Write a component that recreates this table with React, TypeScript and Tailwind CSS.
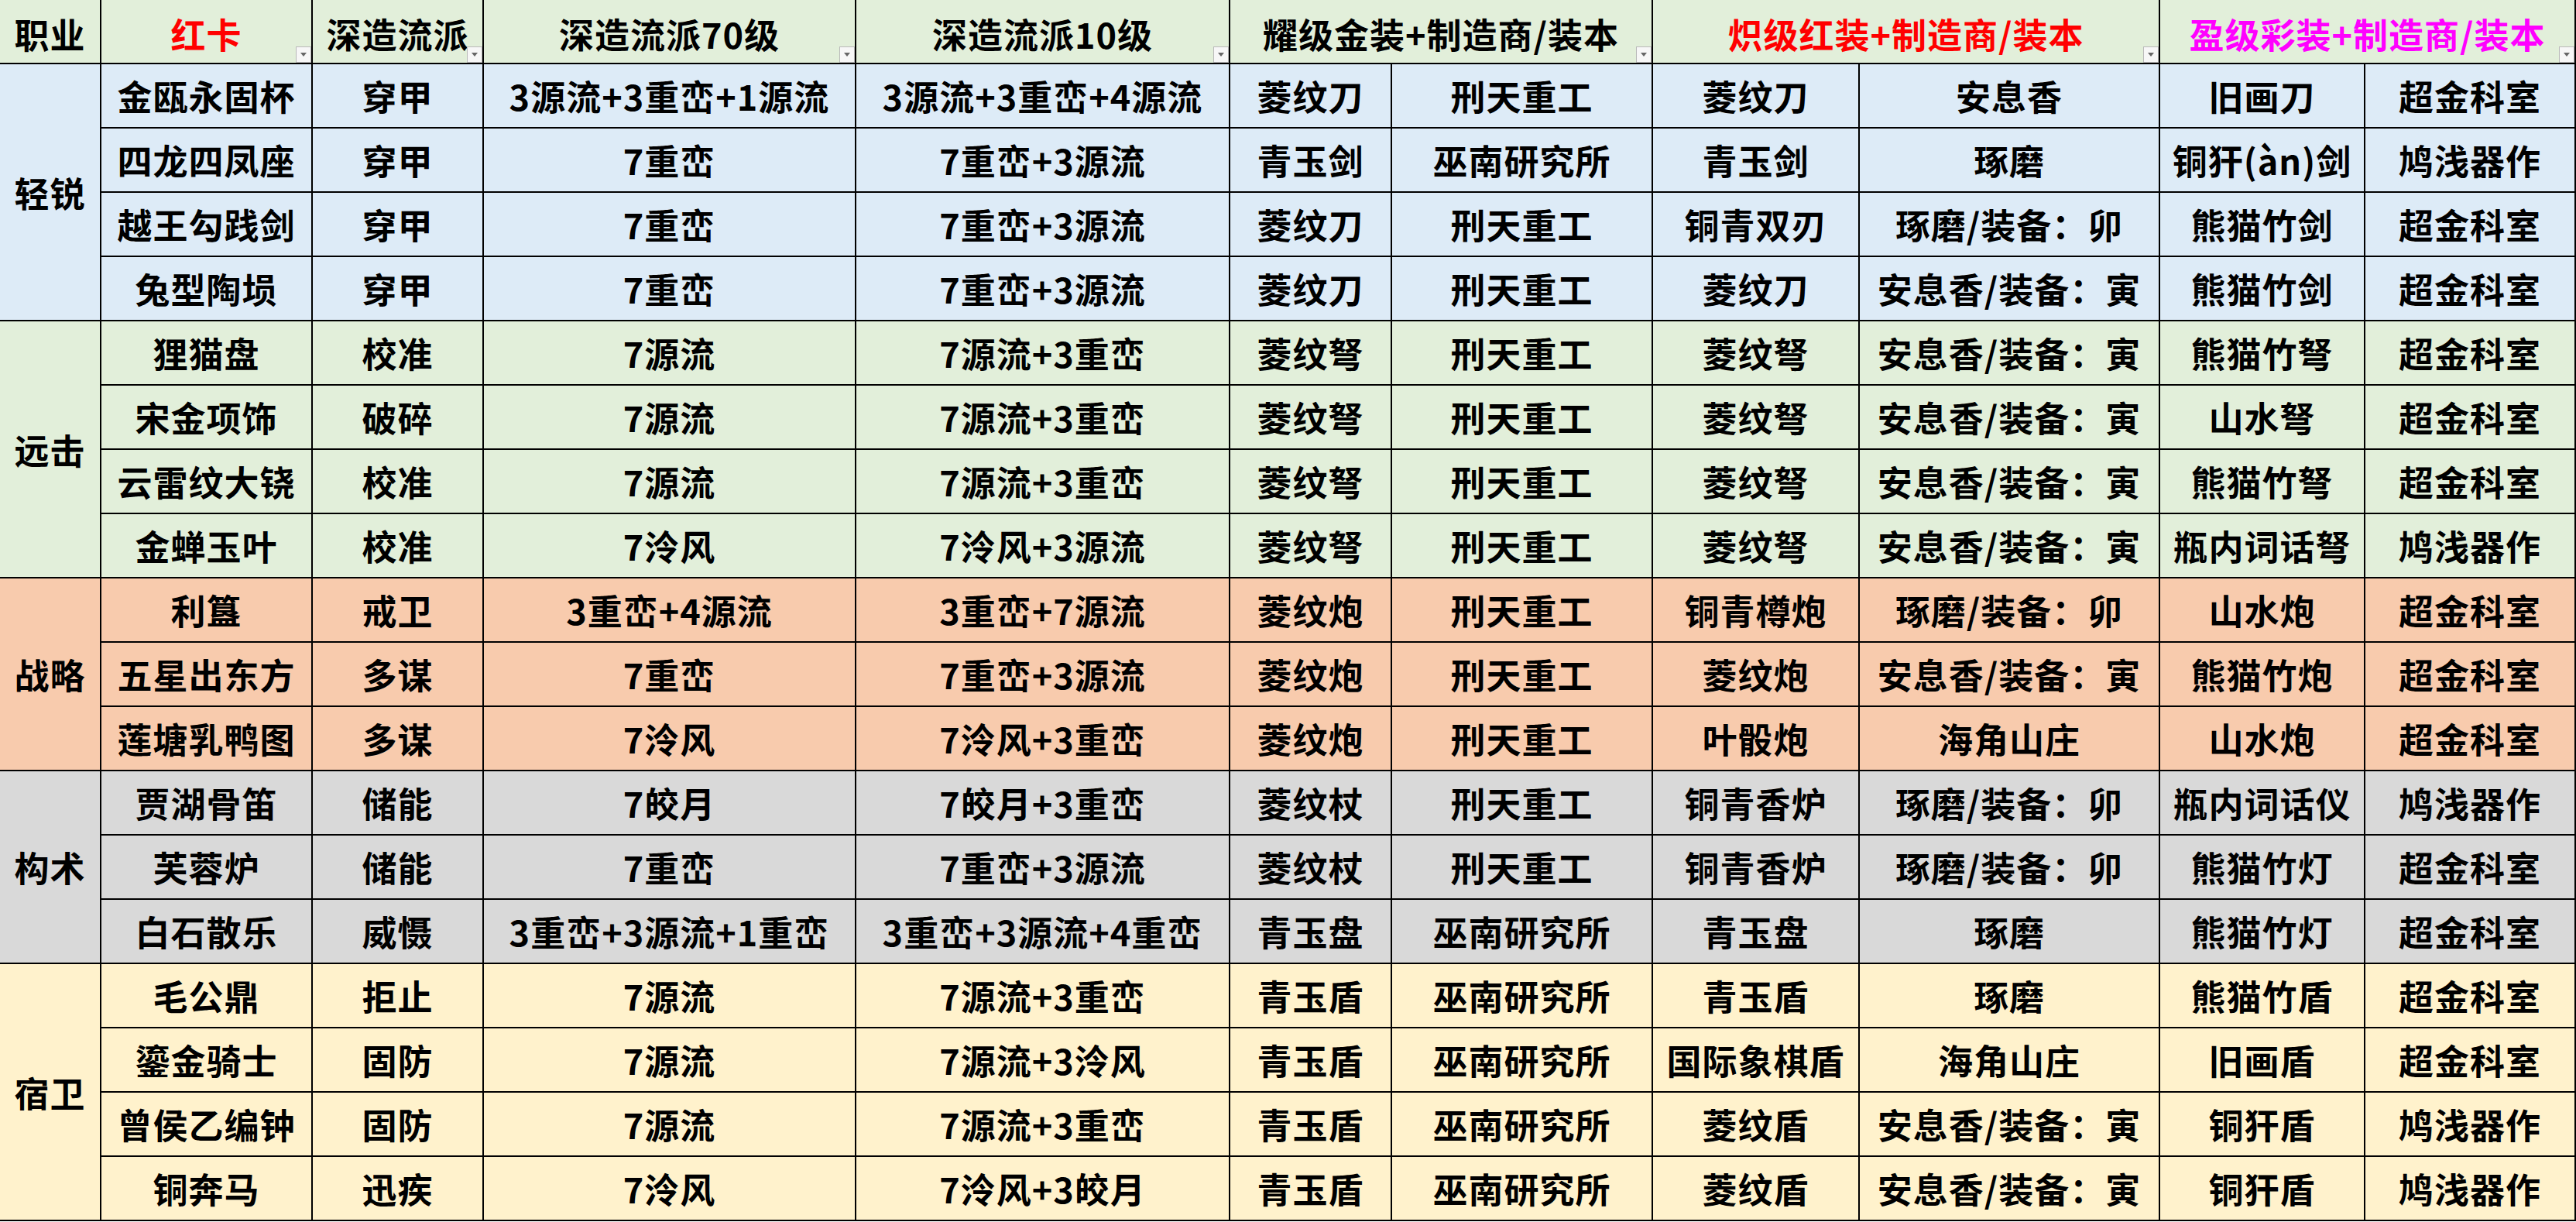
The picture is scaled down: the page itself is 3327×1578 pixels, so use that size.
import React from "react";

type Group = {
  name: string;
  bg: string;
  rows: string[][];
};

const groups: Group[] = [
  {
    name: "轻锐",
    bg: "bg-[#ddebf7]",
    rows: [
      ["金瓯永固杯", "穿甲", "3源流+3重峦+1源流", "3源流+3重峦+4源流", "菱纹刀", "刑天重工", "菱纹刀", "安息香", "旧画刀", "超金科室"],
      ["四龙四凤座", "穿甲", "7重峦", "7重峦+3源流", "青玉剑", "巫南研究所", "青玉剑", "琢磨", "铜犴(àn)剑", "鸠浅器作"],
      ["越王勾践剑", "穿甲", "7重峦", "7重峦+3源流", "菱纹刀", "刑天重工", "铜青双刃", "琢磨/装备：卯", "熊猫竹剑", "超金科室"],
      ["兔型陶埙", "穿甲", "7重峦", "7重峦+3源流", "菱纹刀", "刑天重工", "菱纹刀", "安息香/装备：寅", "熊猫竹剑", "超金科室"],
    ],
  },
  {
    name: "远击",
    bg: "bg-[#e2efda]",
    rows: [
      ["狸猫盘", "校准", "7源流", "7源流+3重峦", "菱纹弩", "刑天重工", "菱纹弩", "安息香/装备：寅", "熊猫竹弩", "超金科室"],
      ["宋金项饰", "破碎", "7源流", "7源流+3重峦", "菱纹弩", "刑天重工", "菱纹弩", "安息香/装备：寅", "山水弩", "超金科室"],
      ["云雷纹大铙", "校准", "7源流", "7源流+3重峦", "菱纹弩", "刑天重工", "菱纹弩", "安息香/装备：寅", "熊猫竹弩", "超金科室"],
      ["金蝉玉叶", "校准", "7泠风", "7泠风+3源流", "菱纹弩", "刑天重工", "菱纹弩", "安息香/装备：寅", "瓶内词话弩", "鸠浅器作"],
    ],
  },
  {
    name: "战略",
    bg: "bg-[#f8cbad]",
    rows: [
      ["利簋", "戒卫", "3重峦+4源流", "3重峦+7源流", "菱纹炮", "刑天重工", "铜青樽炮", "琢磨/装备：卯", "山水炮", "超金科室"],
      ["五星出东方", "多谋", "7重峦", "7重峦+3源流", "菱纹炮", "刑天重工", "菱纹炮", "安息香/装备：寅", "熊猫竹炮", "超金科室"],
      ["莲塘乳鸭图", "多谋", "7泠风", "7泠风+3重峦", "菱纹炮", "刑天重工", "叶骰炮", "海角山庄", "山水炮", "超金科室"],
    ],
  },
  {
    name: "构术",
    bg: "bg-[#d9d9d9]",
    rows: [
      ["贾湖骨笛", "储能", "7皎月", "7皎月+3重峦", "菱纹杖", "刑天重工", "铜青香炉", "琢磨/装备：卯", "瓶内词话仪", "鸠浅器作"],
      ["芙蓉炉", "储能", "7重峦", "7重峦+3源流", "菱纹杖", "刑天重工", "铜青香炉", "琢磨/装备：卯", "熊猫竹灯", "超金科室"],
      ["白石散乐", "威慑", "3重峦+3源流+1重峦", "3重峦+3源流+4重峦", "青玉盘", "巫南研究所", "青玉盘", "琢磨", "熊猫竹灯", "超金科室"],
    ],
  },
  {
    name: "宿卫",
    bg: "bg-[#fff2cc]",
    rows: [
      ["毛公鼎", "拒止", "7源流", "7源流+3重峦", "青玉盾", "巫南研究所", "青玉盾", "琢磨", "熊猫竹盾", "超金科室"],
      ["鎏金骑士", "固防", "7源流", "7源流+3泠风", "青玉盾", "巫南研究所", "国际象棋盾", "海角山庄", "旧画盾", "超金科室"],
      ["曾侯乙编钟", "固防", "7源流", "7源流+3重峦", "青玉盾", "巫南研究所", "菱纹盾", "安息香/装备：寅", "铜犴盾", "鸠浅器作"],
      ["铜奔马", "迅疾", "7泠风", "7泠风+3皎月", "青玉盾", "巫南研究所", "菱纹盾", "安息香/装备：寅", "铜犴盾", "鸠浅器作"],
    ],
  },
];

const FilterButton = () => (
  <div className="absolute right-0 bottom-0 flex h-[21px] w-[20px] items-center justify-center border border-[#b9b9b9] bg-[#f7f7f7]">
    <svg width="8" height="5" viewBox="0 0 8 5">
      <path d="M0 0h8L4 5z" fill="#666" />
    </svg>
  </div>
);

const HeaderCell = ({
  text,
  color = "text-black",
  span = "",
  filter = true,
}: {
  text: string;
  color?: string;
  span?: string;
  filter?: boolean;
}) => (
  <div
    className={`relative flex items-center justify-center bg-[#e2efda] pt-[6px] ${color} ${span}`}
  >
    <span className="whitespace-nowrap">{text}</span>
    {filter && <FilterButton />}
  </div>
);

export default function App() {
  return (
    <div className="min-h-screen w-[3327px] bg-white">
      <div className="grid w-[3327px] grid-cols-[129px_271px_219px_479px_481px_207px_335px_265px_386px_263px_270px] grid-rows-[repeat(19,81px)] gap-[2px] bg-black pr-[2px] pb-[2px] font-['Noto_Sans_CJK_SC',sans-serif] text-[45px] leading-none font-bold tracking-[1px] text-black">
        <HeaderCell text="职业" filter={false} />
        <HeaderCell text="红卡" color="text-[#ff0000]" />
        <HeaderCell text="深造流派" />
        <HeaderCell text="深造流派70级" />
        <HeaderCell text="深造流派10级" />
        <HeaderCell text="耀级金装+制造商/装本" span="col-span-2" />
        <HeaderCell
          text="炽级红装+制造商/装本"
          color="text-[#ff0000]"
          span="col-span-2"
        />
        <HeaderCell
          text="盈级彩装+制造商/装本"
          color="text-[#ff00ff]"
          span="col-span-2"
        />

        {groups.map((g) => (
          <React.Fragment key={g.name}>
            <div
              className={`col-start-1 flex items-center justify-center ${g.bg} ${
                g.rows.length === 4 ? "row-span-4" : "row-span-3"
              }`}
            >
              {g.name}
            </div>
            {g.rows.map((row, ri) =>
              row.map((cell, ci) => (
                <div
                  key={`${ri}-${ci}`}
                  className={`flex items-center justify-center whitespace-nowrap ${g.bg} ${
                    ci === 0 ? "col-start-2" : ""
                  }`}
                >
                  {cell}
                </div>
              ))
            )}
          </React.Fragment>
        ))}
      </div>
    </div>
  );
}
